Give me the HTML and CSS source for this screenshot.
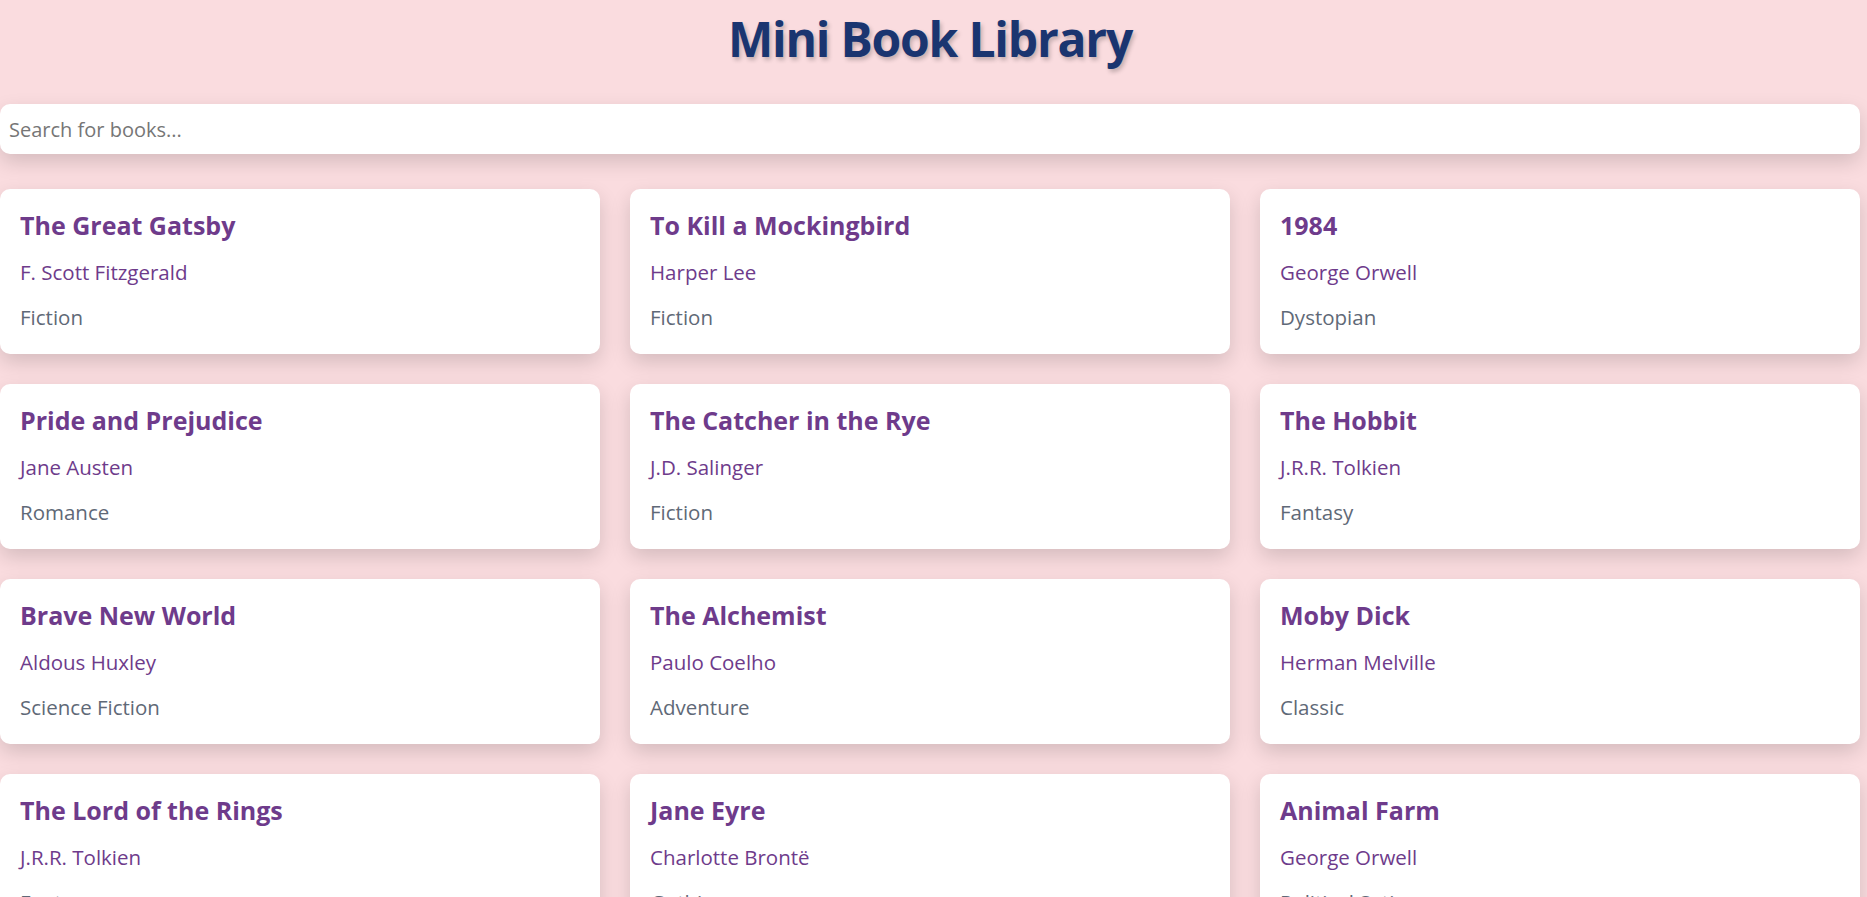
FILE: index.html
```html
<!DOCTYPE html>
<html lang="en">
<head>
<meta charset="utf-8">
<title>Mini Book Library</title>
<link rel="stylesheet" href="styles.css">
</head>
<body>
<div class="app">
  <h1 class="page-title">Mini Book Library</h1>
  <input class="search" type="text" placeholder="Search for books...">
  <div class="book-grid">
    <div class="book-card"><h3 class="book-title">The Great Gatsby</h3><p class="book-author">F. Scott Fitzgerald</p><p class="book-genre">Fiction</p></div>
    <div class="book-card"><h3 class="book-title">To Kill a Mockingbird</h3><p class="book-author">Harper Lee</p><p class="book-genre">Fiction</p></div>
    <div class="book-card"><h3 class="book-title">1984</h3><p class="book-author">George Orwell</p><p class="book-genre">Dystopian</p></div>
    <div class="book-card"><h3 class="book-title">Pride and Prejudice</h3><p class="book-author">Jane Austen</p><p class="book-genre">Romance</p></div>
    <div class="book-card"><h3 class="book-title">The Catcher in the Rye</h3><p class="book-author">J.D. Salinger</p><p class="book-genre">Fiction</p></div>
    <div class="book-card"><h3 class="book-title">The Hobbit</h3><p class="book-author">J.R.R. Tolkien</p><p class="book-genre">Fantasy</p></div>
    <div class="book-card"><h3 class="book-title">Brave New World</h3><p class="book-author">Aldous Huxley</p><p class="book-genre">Science Fiction</p></div>
    <div class="book-card"><h3 class="book-title">The Alchemist</h3><p class="book-author">Paulo Coelho</p><p class="book-genre">Adventure</p></div>
    <div class="book-card"><h3 class="book-title">Moby Dick</h3><p class="book-author">Herman Melville</p><p class="book-genre">Classic</p></div>
    <div class="book-card"><h3 class="book-title">The Lord of the Rings</h3><p class="book-author">J.R.R. Tolkien</p><p class="book-genre">Fantasy</p></div>
    <div class="book-card"><h3 class="book-title">Jane Eyre</h3><p class="book-author">Charlotte Brontë</p><p class="book-genre">Gothic</p></div>
    <div class="book-card"><h3 class="book-title">Animal Farm</h3><p class="book-author">George Orwell</p><p class="book-genre">Political Satire</p></div>
  </div>
</div>
</body>
</html>
```
FILE: styles.css
```css
html, body {
  margin: 0;
  padding: 0;
  background: #fadcdf;
}

body {
  font-family: "Open Sans", "Noto Sans", sans-serif;
  overflow: hidden;
}

.app {
  width: 1860px;
  padding-top: 9px;
}

.page-title {
  margin: 0 0 35px;
  text-align: center;
  font-size: 48px;
  line-height: 60px;
  font-weight: 700;
  letter-spacing: -1.2px;
  color: #1a3570;
  text-shadow: 2px 3px 4px rgba(0, 0, 0, 0.22);
}

.search {
  display: block;
  box-sizing: border-box;
  width: 100%;
  height: 50px;
  margin: 0;
  padding: 0 9px;
  border: none;
  border-radius: 10px;
  background: #ffffff;
  font-family: inherit;
  font-size: 20px;
  color: #333;
  box-shadow: 0 8px 20px rgba(0, 0, 0, 0.15);
  outline: none;
}

.search::placeholder {
  color: #767676;
}

.book-grid {
  display: grid;
  grid-template-columns: repeat(3, 1fr);
  gap: 30px;
  margin-top: 35px;
}

.book-card {
  background: #ffffff;
  border-radius: 10px;
  padding: 20px 20px 23px;
  box-shadow: 0 8px 20px rgba(0, 0, 0, 0.15);
}

.book-title {
  margin: 0 0 18px;
  font-size: 25px;
  line-height: 32px;
  font-weight: 700;
  color: #6e3b8b;
}

.book-author {
  margin: 0 0 18px;
  font-size: 20.5px;
  line-height: 27px;
  color: #6e3b8b;
}

.book-genre {
  margin: 0;
  font-size: 20.5px;
  line-height: 27px;
  color: #5f6977;
}
```
